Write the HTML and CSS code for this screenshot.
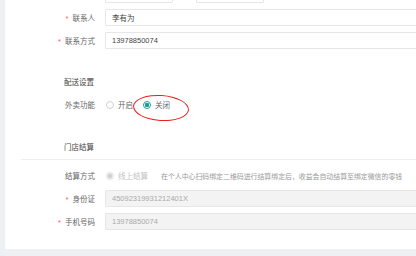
FILE: index.html
```html
<!DOCTYPE html>
<html lang="zh-CN">
<head>
    <meta charset="UTF-8">
    <title>店铺设置</title>
    <link rel="stylesheet" href="styles.css">
</head>
<body>

    <div class="panel">
        <div class="form-row">
            <label class="form-label"></label>
            <input class="form-input short" type="text" value="">
            <span class="spacer"></span>
            <input class="form-input short" type="text" value="">
        </div>
        <div class="form-row">
            <label class="form-label"><i class="req">*</i>联系人</label>
            <input class="form-input" type="text" value="李有为">
        </div>
        <div class="form-row">
            <label class="form-label"><i class="req">*</i>联系方式</label>
            <input class="form-input" type="text" value="13978850074">
        </div>

        <h3 class="section-title first">配送设置</h3>
        <div class="form-row">
            <label class="form-label">外卖功能</label>
            <span class="radio"><span class="dot"></span>开启</span>
            <span class="radio checked"><span class="dot"></span>关闭</span>
            <span class="circle-mark"></span>
        </div>

        <h3 class="section-title">门店结算</h3>
        <div class="divider"></div>
        <div class="form-row">
            <label class="form-label">结算方式</label>
            <span class="radio disabled"><span class="dot"></span>线上结算</span>
            <span class="hint">在个人中心扫码绑定二维码进行结算绑定后，收益会自动结算至绑定微信的零钱</span>
        </div>
        <div class="form-row">
            <label class="form-label"><i class="req">*</i>身份证</label>
            <input class="form-input" type="text" value="45092319931212401X" disabled>
        </div>
        <div class="form-row">
            <label class="form-label"><i class="req">*</i>手机号码</label>
            <input class="form-input" type="text" value="13978850074" disabled>
        </div>
    </div>

    <div class="panel next"></div>

</body>
</html>
```

FILE: styles.css
```css
body {
    margin: 0;
    background-color: #eef0f4;
    font-family: "Liberation Sans", "Noto Sans CJK SC", sans-serif;
    font-size: 7.5px;
    color: #666;
    overflow: hidden;
    height: 256px;
}

.panel {
    position: relative;
    margin: -14px 0 0 5px;
    padding: 0 0 13px 16px;
    background-color: #fff;
    overflow: hidden;
}

.panel.next {
    margin-top: 11px;
    height: 3px;
    padding: 0;
}

.form-row {
    display: flex;
    align-items: center;
    height: 17px;
    margin-bottom: 6px;
}

.form-label {
    flex: none;
    width: 74px;
    margin-right: 10px;
    text-align: right;
    color: #666;
    white-space: nowrap;
}

.req {
    font-style: normal;
    color: #ff5a5f;
    margin-right: 4px;
}

.form-input {
    flex: none;
    box-sizing: border-box;
    height: 17px;
    width: 420px;
    padding: 0 6px;
    border: 1px solid #e6e6e6;
    border-radius: 1px;
    font-family: inherit;
    font-size: 7.5px;
    color: #444;
    background: #fff;
    outline: none;
}

.form-input.short {
    width: 68px;
}

.form-input:disabled {
    background-color: #f3f3f3;
    color: #aaa;
}

.spacer {
    width: 23px;
}

.section-title {
    margin: 26px 0 3px 43px;
    height: 17px;
    line-height: 17px;
    font-size: 7.5px;
    font-weight: normal;
    color: #444;
}

.section-title.first {
    margin: 25px 0 5px 43px;
}

.divider {
    height: 1px;
    background-color: #eee;
    margin: 0 0 7px 0;
}

.radio {
    display: inline-flex;
    align-items: center;
    margin-right: 9px;
    color: #666;
    white-space: nowrap;
}

.radio .dot {
    box-sizing: border-box;
    width: 8px;
    height: 8px;
    margin: 0 4px 0 1px;
    border: 1px solid #d2d2d2;
    border-radius: 50%;
    background: #fff;
}

.radio.checked .dot {
    border-color: #1aa094;
    background: radial-gradient(circle, #1aa094 0 2px, #fff 2.5px);
}

.radio.disabled {
    margin-right: 13px;
    color: #c2c2c2;
}

.radio.disabled .dot {
    border-color: #e2e2e2;
    background: radial-gradient(circle, #d2d2d2 0 2px, #f0f0f0 2.5px);
}

.hint {
    font-size: 6.9px;
    color: #999;
    white-space: nowrap;
}

.circle-mark {
    position: absolute;
    left: 128px;
    top: 109px;
    width: 54px;
    height: 24px;
    border: 1.5px solid #e8211b;
    border-radius: 50%;
    transform: rotate(4deg);
}
```
